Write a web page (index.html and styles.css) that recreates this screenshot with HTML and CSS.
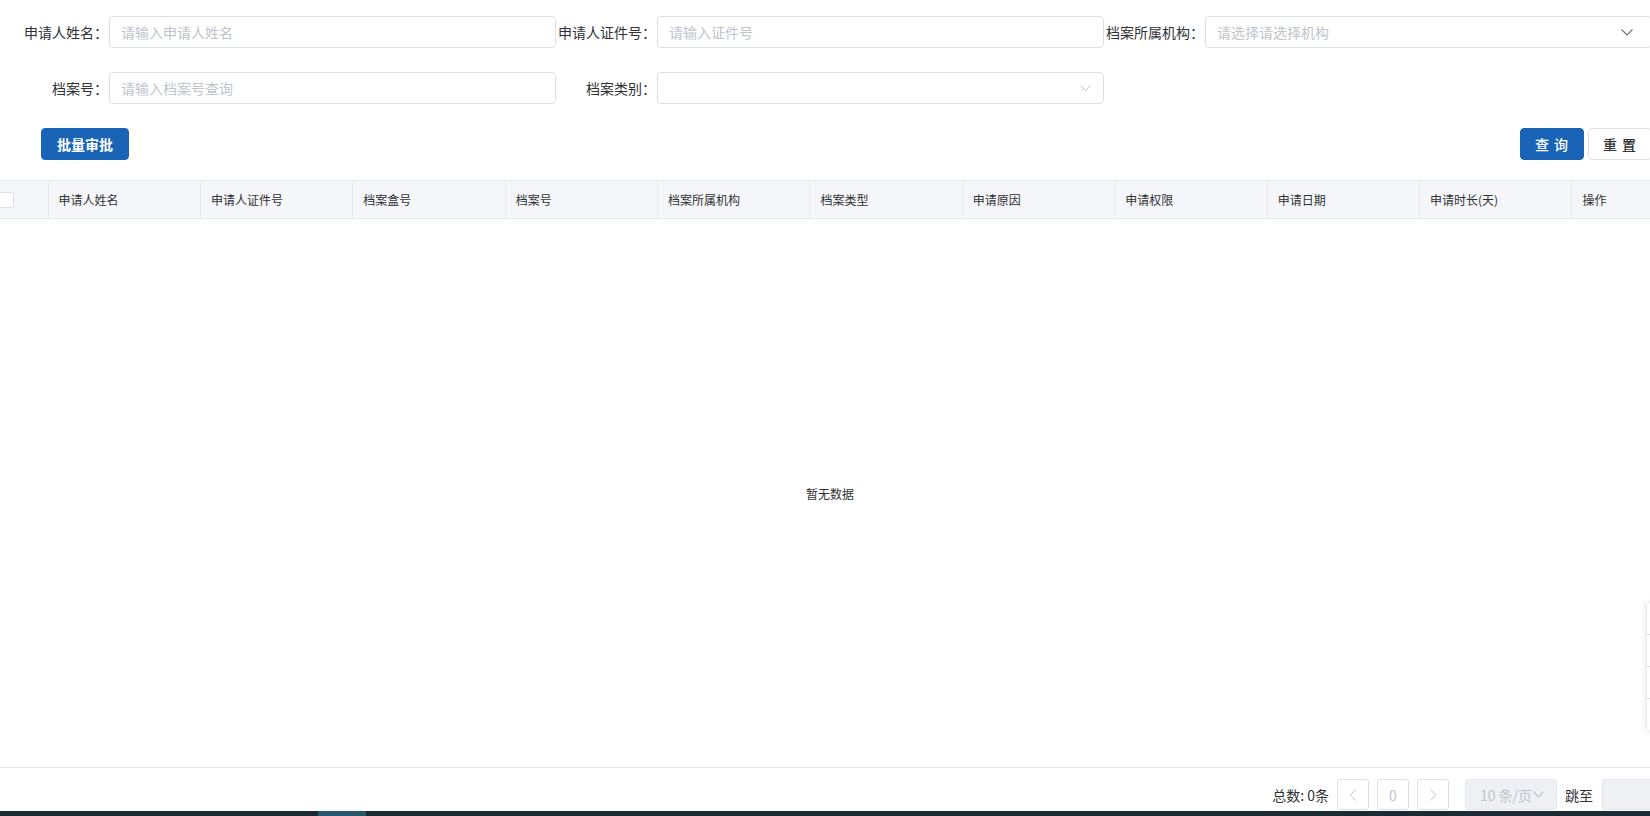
FILE: index.html
```html
<!DOCTYPE html>
<html lang="zh-CN">
<head>
<meta charset="utf-8">
<title>借阅审批</title>
<link rel="stylesheet" href="styles.css">
</head>
<body>
<div class="page">
  <div class="form">
    <div class="form-row">
      <div class="form-item">
        <label class="label">申请人姓名：</label>
        <div class="input"><span class="ph">请输入申请人姓名</span></div>
      </div>
      <div class="form-item">
        <label class="label">申请人证件号：</label>
        <div class="input"><span class="ph">请输入证件号</span></div>
      </div>
      <div class="form-item">
        <label class="label">档案所属机构：</label>
        <div class="input select"><span class="ph">请选择请选择机构</span>
          <svg class="chev dark" width="12" height="7" viewBox="0 0 12 7"><polyline points="0.5,0.5 6,6 11.5,0.5" fill="none" stroke="#6a6d73" stroke-width="1.1"/></svg>
        </div>
      </div>
    </div>
    <div class="form-row">
      <div class="form-item">
        <label class="label">档案号：</label>
        <div class="input"><span class="ph">请输入档案号查询</span></div>
      </div>
      <div class="form-item">
        <label class="label">档案类别：</label>
        <div class="input select"><span class="ph"></span>
          <svg class="chev" width="11" height="6" viewBox="0 0 11 6"><polyline points="0.5,0.5 5.5,5.5 10.5,0.5" fill="none" stroke="#c0c4cc" stroke-width="1"/></svg>
        </div>
      </div>
    </div>
  </div>

  <div class="toolbar">
    <button class="btn primary batch">批量审批</button>
    <div class="toolbar-right">
      <button class="btn primary spaced">查 询</button>
      <button class="btn plain spaced">重 置</button>
    </div>
  </div>

  <div class="table-head">
    <div class="th th-check"><span class="checkbox"></span></div>
    <div class="th">申请人姓名</div>
    <div class="th">申请人证件号</div>
    <div class="th">档案盒号</div>
    <div class="th">档案号</div>
    <div class="th">档案所属机构</div>
    <div class="th">档案类型</div>
    <div class="th">申请原因</div>
    <div class="th">申请权限</div>
    <div class="th">申请日期</div>
    <div class="th">申请时长(天)</div>
    <div class="th">操作</div>
  </div>

  <div class="table-body">
    <span class="empty">暂无数据</span>
  </div>

  <div class="footer">
    <div class="pager">
      <span class="total">总数: 0条</span>
      <span class="pg-btn"><svg width="8" height="12" viewBox="0 0 8 12"><polyline points="6.5,0.5 1.5,6 6.5,11.5" fill="none" stroke="#c0c4cc" stroke-width="1"/></svg></span>
      <span class="pg-btn num">0</span>
      <span class="pg-btn"><svg width="8" height="12" viewBox="0 0 8 12"><polyline points="1.5,0.5 6.5,6 1.5,11.5" fill="none" stroke="#c0c4cc" stroke-width="1"/></svg></span>
      <span class="size-select">10 条/页<svg width="11" height="7" viewBox="0 0 11 7"><polyline points="0.5,0.5 5.5,6 10.5,0.5" fill="none" stroke="#c0c4cc" stroke-width="1.2"/></svg></span>
      <span class="jump-label">跳至</span>
      <span class="jump-input"></span>
    </div>
  </div>

  <div class="taskbar"><span class="task-active"></span></div>

  <div class="side-panel">
    <span class="side-sep"></span>
    <span class="side-sep"></span>
    <span class="side-sep"></span>
  </div>
</div>
</body>
</html>
```

FILE: styles.css
```css
html, body {
  margin: 0;
  padding: 0;
  overflow: hidden;
  background: #ffffff;
}

body {
  font-family: "Noto Sans CJK SC", "Noto Sans", sans-serif;
  color: #303133;
}

.page {
  position: relative;
  width: 1650px;
  height: 816px;
  display: flex;
  flex-direction: column;
  overflow: hidden;
}

/* ---------- form ---------- */
.form {
  width: 1644px;
  padding: 16px 0 0 8px;
  display: flex;
  flex-direction: column;
  gap: 24px;
  flex-shrink: 0;
}

.form-row {
  display: flex;
  height: 32px;
}

.form-item {
  width: 548px;
  display: flex;
  align-items: center;
  flex-shrink: 0;
}

.label {
  width: 101px;
  box-sizing: border-box;
  padding-right: 1px;
  text-align: right;
  font-size: 14px;
  color: #303133;
  white-space: nowrap;
  flex-shrink: 0;
}

.input {
  width: 447px;
  height: 32px;
  box-sizing: border-box;
  border: 1px solid #dcdfe6;
  border-radius: 4px;
  padding: 0 12px 0 11px;
  display: flex;
  align-items: center;
  justify-content: space-between;
  flex-shrink: 0;
}

.ph {
  font-size: 14px;
  color: #c0c4cc;
  white-space: nowrap;
}

.chev {
  flex-shrink: 0;
}

.chev.dark {
  margin-right: 6px;
}

/* ---------- toolbar ---------- */
.toolbar {
  width: 1644px;
  margin: 24px 0 0 8px;
  height: 32px;
  display: flex;
  justify-content: space-between;
  flex-shrink: 0;
}

.btn {
  height: 32px;
  box-sizing: border-box;
  border-radius: 4px;
  font-family: inherit;
  font-size: 14px;
  padding: 0;
  cursor: pointer;
}

.btn.primary {
  background: #1a64b8;
  border: 1px solid #1a64b8;
  color: #ffffff;
}

.btn.plain {
  background: #ffffff;
  border: 1px solid #dcdfe6;
  color: #303133;
}

.batch {
  margin-left: 33px;
  width: 88px;
  font-weight: 600;
}

.toolbar-right {
  display: flex;
  gap: 4px;
}

.spaced {
  width: 64px;
  letter-spacing: 1px;
  font-weight: 500;
}

/* ---------- table ---------- */
.table-head {
  margin-top: 20px;
  height: 39px;
  box-sizing: border-box;
  display: flex;
  background: #f5f6fa;
  border-top: 1px solid #e8eaef;
  border-bottom: 1px solid #e8eaef;
  flex-shrink: 0;
  width: 1740px;
}

.th {
  width: 152.4px;
  flex-shrink: 0;
  box-sizing: border-box;
  border-right: 1px solid #e6e8ee;
  padding-left: 10px;
  display: flex;
  align-items: center;
  font-size: 12px;
  color: #303133;
  white-space: nowrap;
}

.th-check {
  width: 48.5px;
  padding-left: 0;
}

.checkbox {
  width: 16px;
  height: 16px;
  box-sizing: border-box;
  margin-left: -2px;
  background: #ffffff;
  border: 1px solid #dcdfe6;
  border-radius: 2px;
}

.table-body {
  flex: 1;
  width: 1644px;
  padding-left: 8px;
  display: flex;
  align-items: center;
  justify-content: center;
}

.empty {
  font-size: 12px;
  color: #303133;
}

/* ---------- footer ---------- */
.footer {
  border-top: 1px solid #e8e8e8;
  padding: 11px 0 1px 8px;
  width: 1644px;
  flex-shrink: 0;
}

.pager {
  height: 31px;
  display: flex;
  justify-content: flex-end;
  align-items: center;
  font-size: 14px;
}

.total {
  color: #303133;
  margin-right: 8px;
}

.pg-btn {
  width: 32px;
  height: 31px;
  box-sizing: border-box;
  border: 1px solid #dcdfe6;
  border-radius: 3px;
  display: flex;
  align-items: center;
  justify-content: center;
  margin-right: 8px;
}

.pg-btn.num {
  color: #c0c4cc;
  font-size: 14px;
}

.size-select {
  width: 92px;
  height: 31px;
  box-sizing: border-box;
  margin-left: 8px;
  background: #eef0f4;
  border: 1px solid #e4e7ed;
  border-radius: 3px;
  color: #c0c4cc;
  display: flex;
  align-items: center;
  justify-content: center;
  gap: 1px;
  padding-left: 2px;
}

.jump-label {
  margin-left: 8px;
  color: #303133;
}

.jump-input {
  width: 50px;
  height: 31px;
  box-sizing: border-box;
  margin-left: 9px;
  background: #eef0f4;
  border: 1px solid #e4e7ed;
  border-radius: 3px;
}

/* ---------- bottom strip ---------- */
.taskbar {
  height: 5px;
  flex-shrink: 0;
  background: #1c2a33;
  display: flex;
}

.task-active {
  margin-left: 318px;
  width: 48px;
  background: #27586b;
}

/* ---------- floating side panel ---------- */
.side-panel {
  position: absolute;
  left: 1647px;
  top: 603px;
  width: 40px;
  height: 127px;
  background: #ffffff;
  box-shadow: 0 0 6px rgba(0, 0, 0, 0.18);
  display: flex;
  flex-direction: column;
  justify-content: space-evenly;
}

.side-sep {
  height: 1px;
  background: #e0e0e0;
}
```
